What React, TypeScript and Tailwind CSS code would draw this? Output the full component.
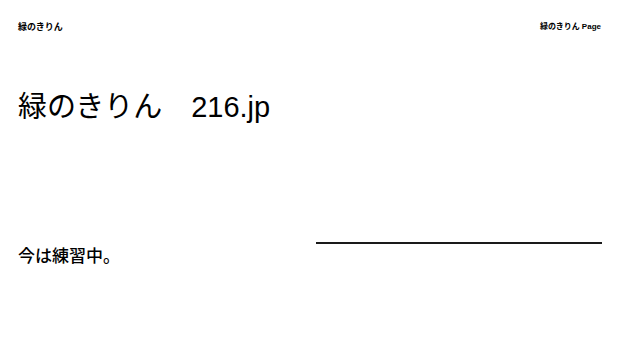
export default function App() {
  return (
    <div
      className="w-[620px] h-[343px] bg-white text-black px-[18px] flex flex-col"
      style={{ fontFamily: '"Liberation Sans", "Noto Sans CJK JP", sans-serif' }}
    >
      <header className="flex justify-between items-center pt-[20px] font-bold leading-[14px]">
        <span className="text-[9px]">緑のきりん</span>
        <span className="text-[8px] mr-[1px]">緑のきりん Page</span>
      </header>

      <h1 className="mt-[56px] text-[29px] leading-[34px] font-normal">緑のきりん　216.jp</h1>

      <div className="mt-[107px] grid grid-cols-2 gap-[12px]">
        <p className="pt-[14px] text-[17px] leading-[24px] font-medium">今は練習中。</p>
        <div className="pt-[11px]">
          <div className="h-[2px] bg-[#1a1a1a]" />
        </div>
      </div>
    </div>
  );
}
